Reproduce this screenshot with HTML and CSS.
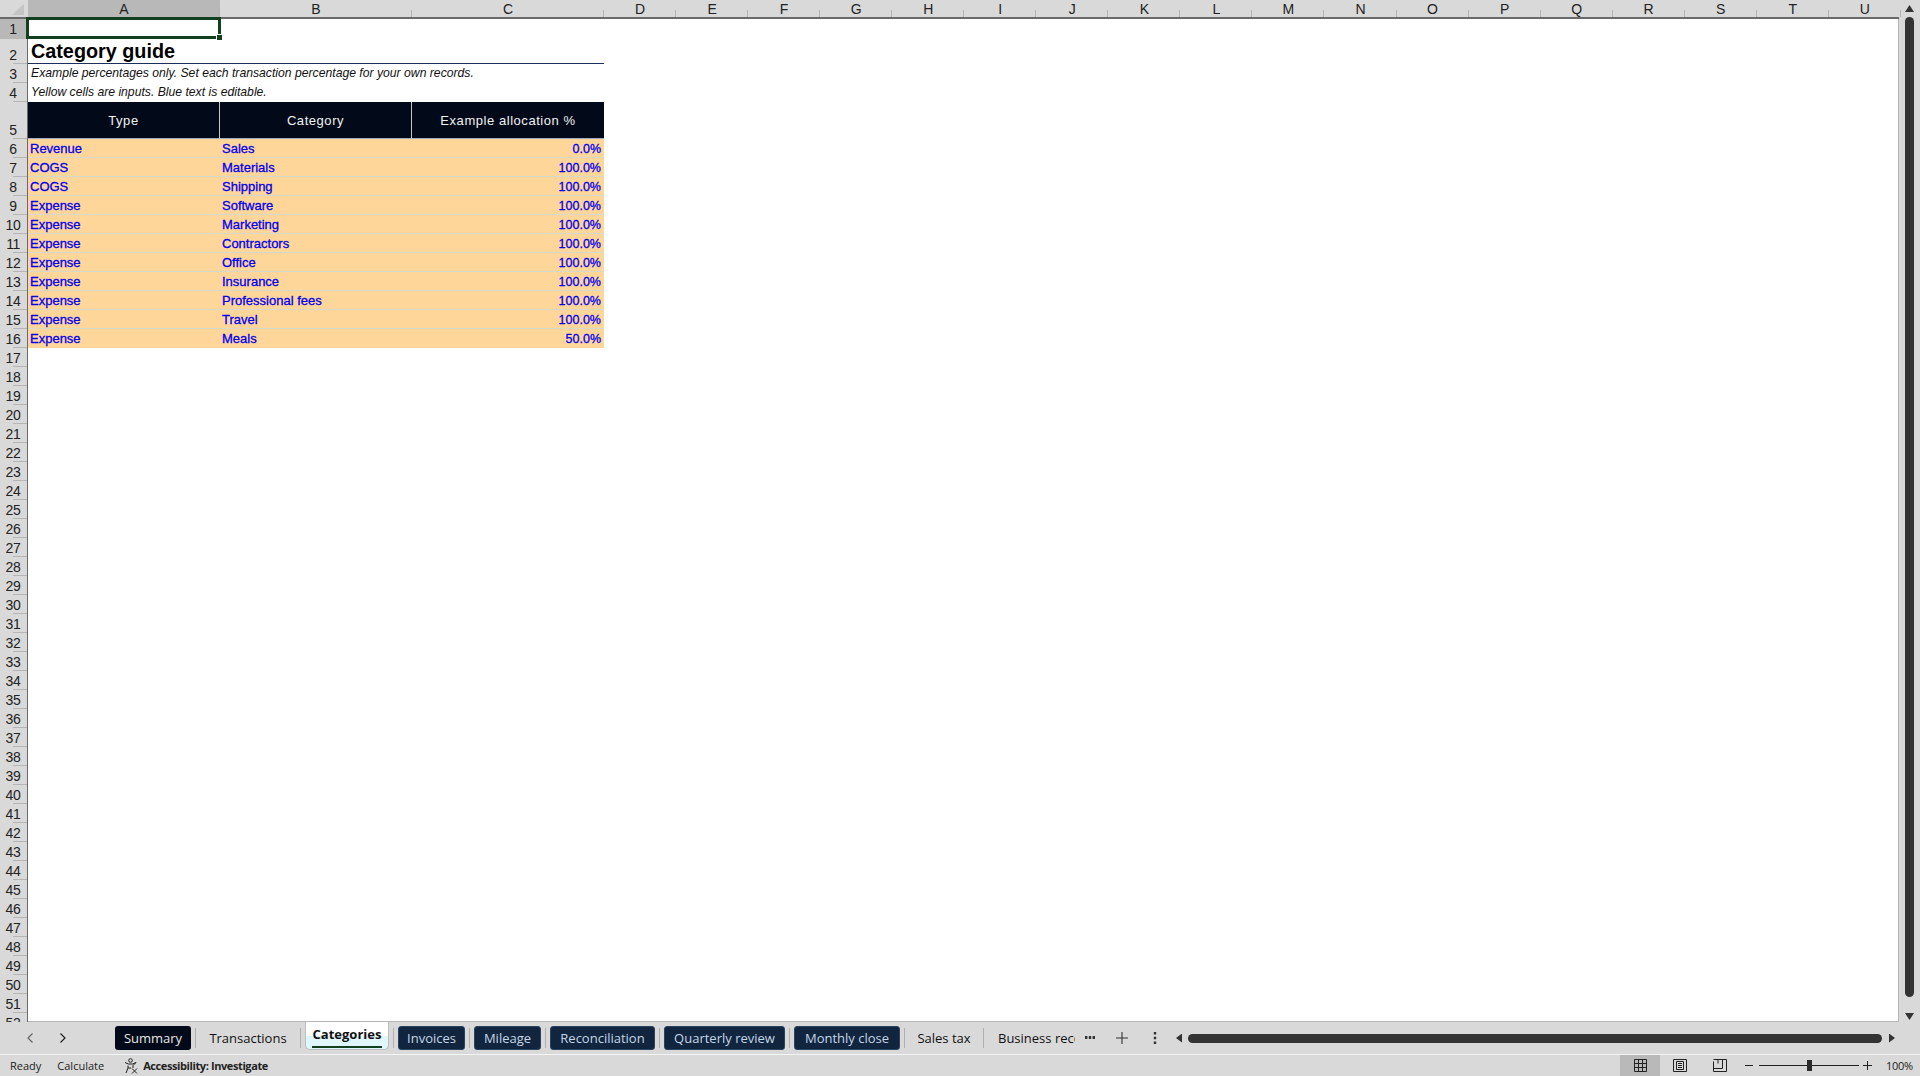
FILE: index.html
```html
<!DOCTYPE html>
<html lang="en">
    <head>
        <meta charset="UTF-8" />
        <meta name="viewport" content="width=device-width, initial-scale=1.0" />
        <title>Category guide</title>
        <link rel="stylesheet" href="styles.css">
    </head>
    <body>
        <div class="app">
            <div class="upper">
                <div class="gridWrap">
                    <!-- column letters -->
                    <div class="colHead">
                        <div class="corner"><span class="cornerTri"></span></div>
                        <div class="col wide on">A</div>
                        <div class="col wide">B</div>
                        <div class="col wide">C</div>
                        <div class="col">D</div>
                        <div class="col">E</div>
                        <div class="col">F</div>
                        <div class="col">G</div>
                        <div class="col">H</div>
                        <div class="col">I</div>
                        <div class="col">J</div>
                        <div class="col">K</div>
                        <div class="col">L</div>
                        <div class="col">M</div>
                        <div class="col">N</div>
                        <div class="col">O</div>
                        <div class="col">P</div>
                        <div class="col">Q</div>
                        <div class="col">R</div>
                        <div class="col">S</div>
                        <div class="col">T</div>
                        <div class="col">U</div>
                    </div>

                    <div class="main">
                        <!-- row numbers -->
                        <div class="rowHead">
                            <div class="rn h20 on">1</div>
                            <div class="rn h25">2</div>
                            <div class="rn">3</div>
                            <div class="rn">4</div>
                            <div class="rn h37">5</div>
                            <div class="rn">6</div>
                            <div class="rn">7</div>
                            <div class="rn">8</div>
                            <div class="rn">9</div>
                            <div class="rn">10</div>
                            <div class="rn">11</div>
                            <div class="rn">12</div>
                            <div class="rn">13</div>
                            <div class="rn">14</div>
                            <div class="rn">15</div>
                            <div class="rn">16</div>
                            <div class="rn">17</div>
                            <div class="rn">18</div>
                            <div class="rn">19</div>
                            <div class="rn">20</div>
                            <div class="rn">21</div>
                            <div class="rn">22</div>
                            <div class="rn">23</div>
                            <div class="rn">24</div>
                            <div class="rn">25</div>
                            <div class="rn">26</div>
                            <div class="rn">27</div>
                            <div class="rn">28</div>
                            <div class="rn">29</div>
                            <div class="rn">30</div>
                            <div class="rn">31</div>
                            <div class="rn">32</div>
                            <div class="rn">33</div>
                            <div class="rn">34</div>
                            <div class="rn">35</div>
                            <div class="rn">36</div>
                            <div class="rn">37</div>
                            <div class="rn">38</div>
                            <div class="rn">39</div>
                            <div class="rn">40</div>
                            <div class="rn">41</div>
                            <div class="rn">42</div>
                            <div class="rn">43</div>
                            <div class="rn">44</div>
                            <div class="rn">45</div>
                            <div class="rn">46</div>
                            <div class="rn">47</div>
                            <div class="rn">48</div>
                            <div class="rn">49</div>
                            <div class="rn">50</div>
                            <div class="rn">51</div>
                            <div class="rn">52</div>
                        </div>

                        <!-- sheet cells -->
                        <div class="sheet">
                            <div class="selCell"></div>
                            <div class="title">Category guide</div>
                            <div class="note">Example percentages only. Set each transaction percentage for your own records.</div>
                            <div class="note">Yellow cells are inputs. Blue text is editable.</div>
                            <div class="row thead">
                                <div>Type</div>
                                <div>Category</div>
                                <div>Example allocation %</div>
                            </div>
                            <div class="row"><div>Revenue</div><div>Sales</div><div>0.0%</div></div>
                            <div class="row"><div>COGS</div><div>Materials</div><div>100.0%</div></div>
                            <div class="row"><div>COGS</div><div>Shipping</div><div>100.0%</div></div>
                            <div class="row"><div>Expense</div><div>Software</div><div>100.0%</div></div>
                            <div class="row"><div>Expense</div><div>Marketing</div><div>100.0%</div></div>
                            <div class="row"><div>Expense</div><div>Contractors</div><div>100.0%</div></div>
                            <div class="row"><div>Expense</div><div>Office</div><div>100.0%</div></div>
                            <div class="row"><div>Expense</div><div>Insurance</div><div>100.0%</div></div>
                            <div class="row"><div>Expense</div><div>Professional fees</div><div>100.0%</div></div>
                            <div class="row"><div>Expense</div><div>Travel</div><div>100.0%</div></div>
                            <div class="row"><div>Expense</div><div>Meals</div><div>50.0%</div></div>
                        </div>
                    </div>
                </div>

                <!-- vertical scrollbar -->
                <div class="vScroll">
                    <span class="arrow up"></span>
                    <span class="vThumb"></span>
                    <span class="arrow down"></span>
                </div>
            </div>

            <!-- sheet tabs -->
            <div class="tabBar">
                <div class="tabNav">
                    <svg width="10" height="12" viewBox="0 0 10 12"><path d="M7.5 1.5 3 6l4.5 4.5" fill="none" stroke="#666" stroke-width="1.2"/></svg>
                    <svg width="10" height="12" viewBox="0 0 10 12"><path d="M2.5 1.5 7 6l-4.500 4.500" fill="none" stroke="#222" stroke-width="1.2"/></svg>
                </div>
                <div class="tabs">
                    <div class="tab dark w76">Summary</div>
                    <i class="sep"></i>
                    <div class="tab plain w96">Transactions</div>
                    <i class="sep"></i>
                    <div class="tab active"><span>Categories</span></div>
                    <i class="sep"></i>
                    <div class="tab navy w67">Invoices</div>
                    <i class="sep"></i>
                    <div class="tab navy w67">Mileage</div>
                    <i class="sep"></i>
                    <div class="tab navy w105">Reconciliation</div>
                    <i class="sep"></i>
                    <div class="tab navy w121">Quarterly review</div>
                    <i class="sep"></i>
                    <div class="tab navy w106">Monthly close</div>
                    <i class="sep"></i>
                    <div class="tab plain w70">Sales tax</div>
                    <i class="sep"></i>
                    <div class="tab plain clip">Business records</div>
                </div>
                <svg class="more" width="12" height="4" viewBox="0 0 12 4"><path d="M1 0h2.400v3H1zM4.800 0h2.400v3H4.800zM8.600 0H11v3H8.600z" fill="#333"/></svg>
                <svg class="plus" width="12" height="12" viewBox="0 0 12 12"><path d="M6 0v12M0 6h12" stroke="#333" stroke-width="1.1"/></svg>
                <svg class="kebab" width="4" height="12" viewBox="0 0 4 12"><path d="M.8 0h2.400v2.400H.8zM.8 4.800h2.400v2.400H.8zM.8 9.600h2.400V12H.8z" fill="#333"/></svg>
                <div class="hScroll">
                    <span class="arrow left"></span>
                    <span class="hThumb"></span>
                    <span class="arrow right"></span>
                </div>
            </div>

            <!-- status bar -->
            <div class="status">
                <span class="st1">Ready</span>
                <span class="st2">Calculate</span>
                <svg class="a11y" width="14" height="16" viewBox="0 0 14 16"><g fill="none" stroke="#222" stroke-width="1"><circle cx="6.500" cy="2.500" r="1.800"/><path d="M1 4.500 4.500 6h4L12 4.500 9 7.500V10M4 7.500V10l-2 5M4 10h3"/><path d="m8 10.500 5 5m0-5-5 5"/></g></svg>
                <b class="st3">Accessibility: Investigate</b>
                <div class="stRight">
                    <div class="viewBtn on">
                        <svg width="13" height="13" viewBox="0 0 13 13"><path d="M.5.5h12v12H.5zM4.500.5v12M8.500.5v12M.5 4.500h12M.5 8.500h12" fill="none" stroke="#222"/></svg>
                    </div>
                    <div class="viewBtn">
                        <svg width="14" height="13" viewBox="0 0 14 13"><path d="M.5.5h13v12H.5zM3.500 2.500h7v8h-7zM5 4.500h4M5 6.500h4M5 8.500h4" fill="none" stroke="#222"/></svg>
                    </div>
                    <div class="viewBtn">
                        <svg width="14" height="13" viewBox="0 0 14 13"><path d="M.5 2.500v10h13V.5M.5.5h13M.5 9.500h9V.5M5 .5v4" fill="none" stroke="#222"/></svg>
                    </div>
                    <span class="zoomMinus"></span>
                    <div class="zoomTrack"><span class="zoomThumb"></span></div>
                    <svg class="zoomPlus" width="9" height="9" viewBox="0 0 9 9"><path d="M4.500 0v9M0 4.500h9" stroke="#222"/></svg>
                    <span class="zoomVal">100%</span>
                </div>
            </div>
        </div>
    </body>
</html>
```
FILE: styles.css
```css
html,
body {
    margin: 0;
    padding: 0;
    height: 100%;
    overflow: hidden;
    background: #d9d9d9;
}
.app {
    display: flex;
    flex-direction: column;
    width: 1920px;
    height: 1076px;
    overflow: hidden;
    font-family: "Liberation Sans", Arial, sans-serif;
}
.upper {
    display: flex;
    flex: 1;
    min-height: 0;
}
.gridWrap {
    display: flex;
    flex: 1;
    flex-direction: column;
    min-width: 0;
}

/* column letters */
.colHead {
    display: flex;
    flex: none;
    height: 19px;
    box-sizing: border-box;
    background: #d9d9d9;
    border-bottom: 2px solid #6a6a6a;
}
.corner {
    display: flex;
    flex: none;
    justify-content: flex-end;
    align-items: flex-end;
    width: 28px;
    padding: 0 4px 2px 0;
    box-sizing: border-box;
}
.cornerTri {
    width: 12px;
    height: 11px;
    background: #c4c4c4;
    clip-path: polygon(100% 0, 100% 100%, 0 100%);
}
.col {
    position: relative;
    flex: none;
    width: 72.05px;
    font-size: 14px;
    line-height: 18px;
    text-align: center;
    color: #222;
}
.col.wide {
    width: 192px;
}
.col::after {
    content: '';
    position: absolute;
    right: 0;
    bottom: 0;
    width: 1px;
    height: 7px;
    background: #b5b5b5;
}
.col.on {
    background: #b8b8b8;
}

.main {
    display: flex;
    flex: 1;
    min-height: 0;
}

/* row numbers */
.rowHead {
    flex: none;
    width: 28px;
    box-sizing: border-box;
    border-right: 1px solid #6a6a6a;
    overflow: hidden;
}
.rn {
    position: relative;
    display: flex;
    align-items: flex-end;
    justify-content: center;
    height: 19px;
    padding-right: 1px;
    box-sizing: border-box;
    font-size: 14px;
    line-height: 18px;
    letter-spacing: -.4px;
    color: #222;
}
.rn::after {
    content: '';
    position: absolute;
    right: 0;
    bottom: 0;
    width: 14px;
    height: 1px;
    background: #b5b5b5;
}
.rn.h20 {
    height: 20px;
    padding-bottom: 1px;
}
.rn.h25 {
    height: 25px;
}
.rn.h37 {
    height: 37px;
}
.rn.on {
    background: #b8b8b8;
}

/* sheet cells */
.sheet {
    position: relative;
    flex: 1;
    min-width: 0;
    padding-top: 20px;
    background: #fff;
    border-right: 1px solid #b5b5b5;
    border-bottom: 1px solid #b5b5b5;
}
.selCell {
    position: absolute;
    top: -2px;
    left: -2px;
    width: 195px;
    height: 22px;
    box-sizing: border-box;
    border: 3px solid #12401f;
}
.selCell::after {
    content: '';
    position: absolute;
    right: -4px;
    bottom: -4px;
    width: 5px;
    height: 5px;
    background: #12401f;
    border: 1px solid #fff;
    border-width: 1px 0 0 1px;
}
.title {
    width: 576px;
    height: 25px;
    padding-left: 3px;
    box-sizing: border-box;
    border-bottom: 1px solid #1b2f5a;
    font-size: 19.8px;
    font-weight: bold;
    line-height: 25px;
    color: #000;
}
.note {
    width: 576px;
    height: 19px;
    padding-left: 3px;
    box-sizing: border-box;
    font-size: 12.2px;
    font-style: italic;
    line-height: 18px;
    color: #111;
}
.row {
    display: grid;
    grid-template-columns: 192px 192px 192px;
    width: 576px;
    height: 19px;
    box-sizing: border-box;
    border-bottom: 1px solid #d8d8cf;
    background: #ffd699;
    font-size: 13px;
    line-height: 19px;
    color: #0000ee;
}
.row>div {
    padding: 0 3px 0 2px;
    -webkit-text-stroke: .3px #0000ee;
}
.row>div:last-child {
    padding-top: 1px;
    font-size: 12.5px;
    line-height: 18px;
    text-align: right;
}
.row:last-child {
    border-bottom: 0;
}
.row.thead {
    height: 37px;
    border-bottom: 1px solid #a8a8c0;
    background: #020a1a;
    line-height: 37px;
    letter-spacing: .55px;
    color: #f2f2f2;
}
.row.thead>div {
    padding: 0;
    border-right: 1px solid #c8c8c8;
    font-size: 13px;
    line-height: 37px;
    text-align: center;
    -webkit-text-stroke: 0;
}
.row.thead>div:last-child {
    border-right: 0;
}

/* scrollbars */
.arrow {
    display: block;
    flex: none;
    background: #333;
}
.arrow.up {
    width: 9px;
    height: 7px;
    clip-path: polygon(50% 0, 100% 100%, 0 100%);
}
.arrow.down {
    width: 9px;
    height: 7px;
    clip-path: polygon(0 0, 100% 0, 50% 100%);
}
.arrow.left {
    width: 6px;
    height: 9px;
    clip-path: polygon(100% 0, 100% 100%, 0 50%);
}
.arrow.right {
    width: 6px;
    height: 9px;
    clip-path: polygon(0 0, 100% 50%, 0 100%);
}
.vScroll {
    display: flex;
    flex: none;
    flex-direction: column;
    align-items: center;
    width: 21px;
    padding: 5px 0 2px;
    box-sizing: border-box;
}
.vThumb {
    flex: 1;
    width: 9px;
    margin: 5px 0 16px;
    border-radius: 5px;
    background: #333;
}

/* sheet tabs */
.tabBar {
    display: flex;
    flex: none;
    align-items: center;
    height: 33px;
    box-sizing: border-box;
    background: #d9d9d9;
    border-bottom: 1px solid #f4f4f4;
}
.tabNav {
    display: flex;
    flex: none;
    justify-content: space-between;
    width: 43px;
    margin-left: 25px;
    margin-right: 47px;
}
.tabs {
    display: flex;
    flex: none;
    align-items: center;
    align-self: stretch;
    width: 960px;
    overflow: hidden;
    font-family: "Open Sans", "Noto Sans", sans-serif;
    font-size: 13px;
}
.sep {
    flex: none;
    width: 1px;
    height: 20px;
    margin: 0 4px;
    background: #b0b0b0;
}
.tab {
    flex: none;
    height: 24px;
    box-sizing: border-box;
    border-radius: 3px;
    line-height: 25px;
    text-align: center;
    white-space: nowrap;
}
.tab.dark {
    background: #020a1a;
    color: #e6e6e6;
}
.tab.navy {
    background: #11253f;
    border: 1px solid #2a4460;
    line-height: 23px;
    color: #c4d6e6;
}
.tab.plain {
    color: #111;
}
.tab.active {
    align-self: flex-start;
    width: 84px;
    height: 28px;
    padding-top: 3px;
    border: 1px solid #bdbdbd;
    border-top: 0;
    border-radius: 0 0 5px 5px;
    background: linear-gradient(#fff 14px, #dff6fa 14px);
    font-weight: 700;
    line-height: 19px;
    color: #111;
}
.tab.active>span {
    display: inline-block;
    height: 21px;
    padding: 0 1px;
    border-bottom: 2px solid #12401f;
}
.tab.clip {
    width: 87px;
    padding-left: 10px;
    overflow: hidden;
    text-align: left;
}
.w67 {
    width: 67px;
}
.w70 {
    width: 70px;
}
.w76 {
    width: 76px;
}
.w96 {
    width: 96px;
}
.w105 {
    width: 105px;
}
.w106 {
    width: 106px;
}
.w121 {
    width: 121px;
}
.more {
    flex: none;
    margin-left: 9px;
}
.plus {
    flex: none;
    margin-left: 20px;
}
.kebab {
    flex: none;
    margin-left: 25px;
}
.hScroll {
    display: flex;
    flex: none;
    align-items: center;
    width: 740px;
    margin-left: 19px;
}
.hThumb {
    flex: none;
    width: 694px;
    height: 9px;
    margin: 0 7px 0 6px;
    border-radius: 5px;
    background: #333;
}

/* status bar */
.status {
    display: flex;
    flex: none;
    align-items: center;
    height: 21px;
    background: #d9d9d9;
    font-family: "Open Sans", "Noto Sans", sans-serif;
    font-size: 11px;
    color: #222;
}
.st1 {
    margin-left: 10px;
}
.st2 {
    margin-left: 16px;
}
.a11y {
    margin-left: 20px;
}
.st3 {
    margin-left: 5px;
    font-weight: 700;
    letter-spacing: -.4px;
}
.stRight {
    display: flex;
    align-items: center;
    align-self: stretch;
    margin-left: auto;
}
.viewBtn {
    display: flex;
    align-items: center;
    justify-content: center;
    align-self: stretch;
    width: 40px;
}
.viewBtn.on {
    background: #b9b9b9;
}
.zoomMinus {
    width: 8px;
    height: 1px;
    margin-left: 5px;
    background: #222;
}
.zoomTrack {
    position: relative;
    width: 100px;
    height: 1px;
    margin-left: 6px;
    background: #222;
}
.zoomThumb {
    position: absolute;
    top: -5px;
    left: 48px;
    width: 5px;
    height: 11px;
    background: #2b2b2b;
}
.zoomPlus {
    margin-left: 4px;
}
.zoomVal {
    width: 26px;
    margin-left: 14px;
    margin-right: 8px;
    letter-spacing: -.3px;
}
```
